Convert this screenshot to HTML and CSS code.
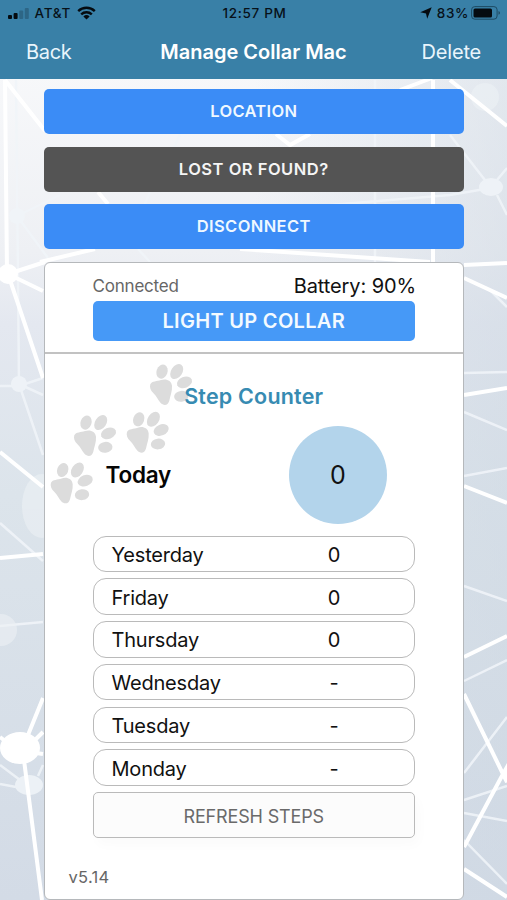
FILE: index.html
```html
<!DOCTYPE html>
<html lang="en">
<head>
<meta charset="utf-8">
<meta name="viewport" content="width=device-width">
<title>Manage Collar Mac</title>
<link rel="stylesheet" href="styles.css">
</head>
<body>
<svg class="network" viewBox="0 0 507 900" aria-hidden="true">
  <defs>
    <linearGradient id="sky" x1="0" y1="0" x2="0" y2="1"><stop offset=".08" stop-color="#f7f8fa"/><stop offset=".28" stop-color="#eef0f4"/><stop offset=".36" stop-color="#e4e8f0"/><stop offset=".55" stop-color="#dce4eb"/><stop offset="1" stop-color="#d3dbe6"/></linearGradient>
    <linearGradient id="shade" x1="0" y1="0" x2="1" y2="0"><stop offset=".5" stop-color="#cdd7e2" stop-opacity="0"/><stop offset="1" stop-color="#cdd7e2" stop-opacity=".5"/></linearGradient>
  </defs>
  <path fill="url(#sky)" d="M0 0h507v900H0z"/>
  <path fill="url(#shade)" d="M0 0h507v900H0z"/>
  <g class="faint">
    <path d="M16 80 19 384M17 216 60 195M17 216 48 258M0 386H19L43 378M19 384 43 395M19 384 43 455M0 523 43 561M0 626 43 622M0 765 20 780M0 784 16 787M43 765 38 776M450 135 488 184M330 205 450 195 485 189M497 180 507 168M497 195 507 215M490 290 507 307M464 373 507 372M464 412 507 430M464 476 507 468M464 586 507 601M464 681 507 660M464 773 507 717M464 800 507 786M464 813 507 821M464 840 507 884M375 80V262M180 134 173 150M150 192 144 206M138 249 150 262"/>
    <circle cx="17" cy="216" r="8"/><circle cx="19" cy="384" r="8"/><ellipse cx="491" cy="187" rx="12" ry="9"/><ellipse cx="29" cy="785" rx="14" ry="10"/>
  </g>
  <g class="haze"><ellipse cx="42" cy="506" rx="20" ry="32"/><circle cx="1" cy="630" r="16"/><circle cx="485" cy="97" r="14"/></g>
  <g class="bright">
    <path d="M5 80 7 274M5 80 45 131M8 274 45 262M8 274 43 291M8 274 43 378M0 452 43 487M0 558 43 554M28 735 43 698M33 742 43 732M36 753 43 754M0 737 10 745M24 760 42 900M450 80 507 126M464 265 507 263M464 278 507 298M464 395 507 388M464 486 507 503M464 657 507 636M464 694 503 774 464 847M503 774 507 767V782ZM464 869 507 897M433 80V262M276 134 290 145 310 134M98 192 108 204M240 249 430 262M40 262 95 249M400 90 432 78"/>
    <circle cx="8" cy="274" r="8"/><ellipse cx="20" cy="748" rx="18" ry="14"/>
  </g>
</svg>

<div class="screen">
  <header class="top">
    <div class="status">
      <div class="carrier">
        <svg width="21" height="13" viewBox="0 0 21 13"><rect x="0" y="8" width="4" height="4" rx="1"/><rect x="5.6" y="6" width="4" height="6" rx="1"/><rect x="11.2" y="3.5" width="4" height="8.5" rx="1" opacity=".22"/><rect x="16.8" y="1" width="4" height="11" rx="1" opacity=".22"/></svg>
        <span class="network-name">AT&amp;T</span>
        <svg width="19" height="14" viewBox="0 0 19 14"><path class="arc" d="M1.2 5.1a12 12 0 0 1 16.6 0M4.2 8.3a7.7 7.7 0 0 1 10.6 0"/><path d="M6.4 10.4a4.5 4.5 0 0 1 6.2 0L9.5 13.6z"/></svg>
      </div>
      <span class="clock">12:57 PM</span>
      <div class="power">
        <svg width="12" height="12" viewBox="0 0 12 12"><path d="M11.7.3 7.2 11.7 6 6.5.3 5.2z"/></svg>
        <span class="percent">83%</span>
        <svg width="30" height="14" viewBox="0 0 30 14"><rect class="cell" x=".6" y=".6" width="25.5" height="12.6" rx="3.2"/><rect x="2.5" y="2.4" width="18.5" height="9" rx="1.5"/><path opacity=".45" d="M27.5 5c2 .8 2 3 0 3.8z"/></svg>
      </div>
    </div>
    <nav class="bar"><span class="back">Back</span><h1>Manage Collar Mac</h1><span class="delete">Delete</span></nav>
  </header>

  <main>
    <div class="action"><span class="t-location">LOCATION</span></div>
    <div class="action dark"><span class="t-lost">LOST OR FOUND?</span></div>
    <div class="action"><span class="t-disc">DISCONNECT</span></div>

    <section class="card">
      <div class="device">
        <div class="state"><span class="connected">Connected</span><span class="battery">Battery: 90%</span></div>
        <div class="light"><span>LIGHT UP COLLAR</span></div>
      </div>
      <div class="steps">
        <svg class="paws" width="150" height="150" viewBox="50 360 150 150" aria-hidden="true">
          <defs><g id="paw"><path d="M.3 20C2 16.5 7 17.2 11 15.7 16 14 21.500 16 22 21.500 22.300 27 20.500 31 19.300 36.500 18 41.500 13.500 41.800 10.500 38.500 8 35.500 6.500 32 3.500 29 .7 26.500-.7 23 .3 20z"/><ellipse cx="12" cy="7.3" rx="5.5" ry="7.2" transform="rotate(20 12 7.3)"/><ellipse cx="26.7" cy="7.3" rx="5.6" ry="8.2" transform="rotate(34 26.7 7.3)"/><ellipse cx="34.5" cy="18" rx="7.8" ry="5.5" transform="rotate(-22 34.5 18)"/><ellipse cx="31.3" cy="32" rx="7.2" ry="5.4" transform="rotate(-6 31.3 32)"/></g></defs>
          <use href="#paw" x="150" y="364.3"/><use href="#paw" x="74" y="415.3"/><use href="#paw" x="126.7" y="412"/><use href="#paw" x="50.7" y="462.7"/>
        </svg>
        <h2>Step Counter</h2>
        <div class="today"><span class="today-label">Today</span><span class="today-count">0</span></div>
        <ul class="days">
          <li><span>Yesterday</span><b>0</b></li>
          <li><span>Friday</span><b>0</b></li>
          <li><span>Thursday</span><b>0</b></li>
          <li><span>Wednesday</span><b>-</b></li>
          <li><span>Tuesday</span><b>-</b></li>
          <li><span>Monday</span><b>-</b></li>
        </ul>
        <div class="refresh"><span>REFRESH STEPS</span></div>
        <div class="version">v5.14</div>
      </div>
    </section>
  </main>
</div>
</body>
</html>
```
FILE: styles.css
```css
* { box-sizing: border-box; }
body { margin: 0; font-family: Inter, "Liberation Sans", sans-serif; color: #111; background: #dde4ec; }
h1, h2, ul { margin: 0; padding: 0; }
.screen { position: relative; height: 900px; overflow: hidden; }
.network { position: absolute; top: 0; left: 0; width: 507px; height: 900px; }
.faint { fill: #f1f5f9; stroke: #f1f5f9; stroke-width: 2.5; opacity: .85; }
.bright { fill: #fff; stroke: #fff; stroke-width: 4; }
.haze { fill: #edf1f5; opacity: .6; }
.faint path, .bright path { fill: none; }
.faint circle, .faint ellipse { stroke: none; }

.top { height: 79px; background: #3980a7; }
.status { height: 26px; display: grid; grid-template-columns: 1fr auto 1fr; align-items: center; padding: 0 6px 0 8px; font-size: 13.5px; font-weight: 500; color: #071119; }
.status svg { display: block; fill: #050b10; }
.carrier, .power { display: flex; align-items: center; }
.carrier { gap: 5.5px; }
.network-name { letter-spacing: .75px; }
.clock { letter-spacing: .65px; }
.power { justify-content: flex-end; gap: 5px; }
.percent { margin-right: -3px; letter-spacing: .6px; }
.arc { fill: none; stroke: #050b10; stroke-width: 2.4; }
.cell { fill: none; stroke: #1d4a63; stroke-width: 1; }
.bar { height: 52px; display: grid; grid-template-columns: 1fr auto 1fr; align-items: center; padding: 0 26px; font-size: 20px; color: #e9f5fc; }
.bar h1 { font-size: 20px; font-weight: 600; color: #fff; }
.back { letter-spacing: -.3px; }
.delete { text-align: right; letter-spacing: -.2px; }

main { padding: 10px 43px 0 43.5px; }
.action { height: 45px; margin-bottom: 12.5px; padding-bottom: 1px; border-radius: 5px; background: #3b8cf6; color: #eff8ff; display: flex; align-items: center; justify-content: center; font-size: 16.5px; font-weight: 600; }
.t-location { letter-spacing: .32px; }
.t-lost { letter-spacing: .5px; }
.t-disc { letter-spacing: .4px; }
.dark { background: #545454; color: #f5f5f5; }
.card { height: 638px; border: 1.5px solid #b5b8bb; border-radius: 6px; background: #fff; }
.device { height: 91px; padding: 10px 48px 0; border-bottom: 2px solid #c2c2c2; }
.state { height: 28px; padding-bottom: 2px; display: flex; justify-content: space-between; align-items: center; white-space: nowrap; }
.connected { font-size: 17px; letter-spacing: -.2px; color: #666; }
.battery { font-size: 20px; letter-spacing: -.1px; margin-right: -1px; }
.light { height: 40px; border-radius: 5px; background: #4699f7; color: #f3faff; display: flex; align-items: center; justify-content: center; font-size: 20px; font-weight: 600; letter-spacing: .3px; }
.steps { position: relative; padding: 27px 48px 0; }
.paws { position: absolute; left: 5.5px; top: 6px; fill: #dcdcdc; }
h2 { position: relative; height: 30px; line-height: 30px; text-align: center; font-size: 21.5px; font-weight: 600; letter-spacing: .2px; color: #378bb2; }
.today { height: 98px; margin-top: 15px; padding: 0 28px 0 13px; display: flex; align-items: center; justify-content: space-between; }
.today-label { font-size: 22.5px; font-weight: 600; letter-spacing: -.2px; color: #050505; }
.today-count { width: 98px; height: 98px; border-radius: 50%; background: #b3d4eb; display: flex; align-items: center; justify-content: center; font-size: 25px; }
.days { list-style: none; margin-top: 12px; display: grid; gap: 6.25px; }
.days li { height: 36.5px; border: 1.5px solid #bababa; border-radius: 13px; display: grid; grid-template-columns: 203px 39px; align-items: center; padding: 2px 0 0 18px; font-size: 20px; letter-spacing: -.2px; }
.days b { font-weight: 400; text-align: center; }
.refresh { height: 46.5px; margin-top: 6px; padding-top: 2px; border: 1.5px solid #bababa; border-radius: 5px; background: #fcfcfc; box-shadow: 4px 7px 12px rgba(0,0,0,.02); display: flex; align-items: center; justify-content: center; font-size: 18px; letter-spacing: -.15px; color: #6a6a6a; }
.version { margin: 29px 0 0 -24px; font-size: 16.5px; line-height: 21px; letter-spacing: .3px; color: #666; }
```
